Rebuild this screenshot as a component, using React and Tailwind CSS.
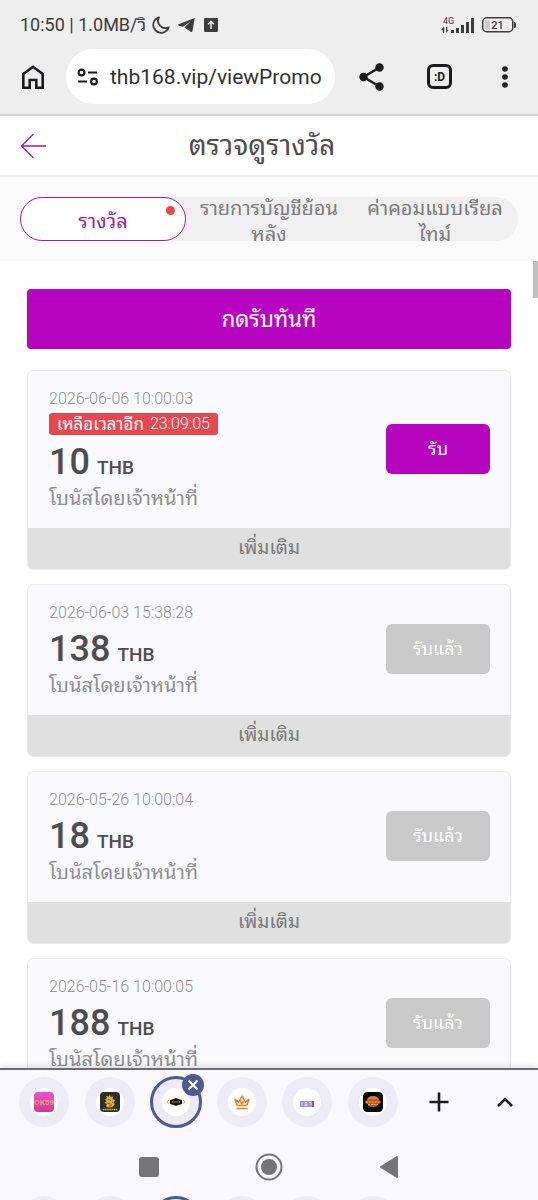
import { useState } from "react";

const REWARDS = [
  { date: "2026-06-06 10:00:03", amount: 10, timeLeft: "23:09:05", claimed: false },
  { date: "2026-06-03 15:38:28", amount: 138, claimed: true },
  { date: "2026-05-26 10:00:04", amount: 18, claimed: true },
  { date: "2026-05-16 10:00:05", amount: 188, claimed: true },
];

const TABS = ["รางวัล", "รายการบัญชีย้อนหลัง", "ค่าคอมแบบเรียลไทม์"];

function StatusBar() {
  return (
    <div className="flex h-[49px] items-center justify-between pl-5 pr-[22px] text-[#3c3c3c]">
      <div className="flex items-center text-lg leading-6">
        <span>10:50 | 1.0MB/วิ</span>
        <svg className="ml-[6px] h-[18px] w-[18px]" viewBox="0 0 18 18" fill="none" stroke="currentColor" strokeWidth="1.8" strokeLinejoin="round">
          <path d="M7 1.3A7.9 7.9 0 1 0 16.7 11.3A7.3 7.3 0 0 1 7 1.3Z" />
        </svg>
        <svg className="ml-2 h-4 w-[17px]" viewBox="0 0 17 16" fill="currentColor">
          <path d="M16.7 1L0 7.6Q0 8.4 1 8.7L4.8 9.8L12.5 4.6L6.5 10.4L13 15Q14.2 15.4 14.5 14Z" />
        </svg>
        <svg className="ml-[9px] h-[14px] w-[14px]" viewBox="0 0 14 14">
          <rect width="14" height="14" rx="1" fill="currentColor" />
          <path d="M7 11V3.5M4 6.3L7 3.3L10 6.3" fill="none" stroke="#eee" strokeWidth="1.5" />
        </svg>
      </div>
      <div className="flex items-center gap-[7px]">
        <svg className="h-[18px] w-[34px]" viewBox="0 0 34 18" fill="currentColor">
          <text x="2" y="8" fontSize="9" fontFamily="Roboto">4G</text>
          <path d="M2.5 11L0 14h1.800v3h1.400v-6zM5 11v6l2.500-3H6.300v-3z" />
          <rect x="10" y="14" width="3" height="3" />
          <rect x="15" y="12" width="3" height="5" />
          <rect x="20" y="9" width="3" height="8" />
          <rect x="25" y="6" width="3" height="11" />
          <rect x="30" y="2" width="3" height="15" />
        </svg>
        <svg className="h-4 w-[34px]" viewBox="0 0 34 16">
          <rect x="0.75" y="0.75" width="30" height="14" rx="4" fill="none" stroke="currentColor" strokeWidth="1.5" />
          <rect x="3" y="3" width="5" height="9.5" rx="1.5" fill="#ccc" />
          <path d="M32 5v6q2 0 2-1.500v-3Q34 5 32 5z" fill="currentColor" />
          <text x="15.5" y="12" fontSize="11" fontFamily="Roboto" fontWeight="500" textAnchor="middle" fill="currentColor">21</text>
        </svg>
      </div>
    </div>
  );
}

function BrowserBar() {
  return (
    <div className="flex items-center border-b-2 border-[#d4d4d4] pb-[10px] pl-5 pr-[23px] text-[#1b1b1f]">
      <button type="button" aria-label="Home">
        <svg className="h-[26px] w-[26px]" viewBox="0 0 26 26" fill="none" stroke="currentColor" strokeWidth="2.6">
          <path d="M3.3 10L13 2.8L22.7 10V23.7H16.3V16H9.7V23.7H3.3Z" />
        </svg>
      </button>
      <label className="ml-5 flex h-[55px] min-w-0 flex-1 items-center gap-3 rounded-full bg-white pl-[11px] pr-2">
        <svg className="h-5 w-[21px] shrink-0" viewBox="0 0 21 20" fill="none" stroke="currentColor" strokeWidth="2.2">
          <circle cx="4.5" cy="5.5" r="2.9" />
          <path d="M11 5.5H20M1 14.5H10" />
          <circle cx="17" cy="14.5" r="2.9" />
        </svg>
        <input
          type="text"
          aria-label="Address"
          defaultValue="thb168.vip/viewPromo"
          className="w-full min-w-0 bg-transparent text-[21px] leading-8 text-[#303034] outline-none"
        />
      </label>
      <button type="button" aria-label="Share" className="ml-6">
        <svg className="h-7 w-[26px]" viewBox="0 0 26 28" fill="currentColor">
          <path d="M20.5 4.5L4.5 14L20.5 23.5" fill="none" stroke="currentColor" strokeWidth="2.4" />
          <circle cx="20.5" cy="4.5" r="4.2" />
          <circle cx="4.5" cy="14" r="4.2" />
          <circle cx="20.5" cy="23.5" r="4.2" />
        </svg>
      </button>
      <button type="button" aria-label="Tabs" className="ml-[42px] flex h-[25px] w-[25px] items-center justify-center rounded-md border-[3px] border-current text-xs font-bold">
        :D
      </button>
      <button type="button" aria-label="Menu" className="ml-[43px]">
        <svg className="h-6 w-5" viewBox="0 0 20 24" fill="currentColor">
          <circle cx="10" cy="4" r="2.8" />
          <circle cx="10" cy="12" r="2.8" />
          <circle cx="10" cy="20" r="2.8" />
        </svg>
      </button>
    </div>
  );
}

function RewardCard({ reward }) {
  return (
    <article className="overflow-hidden rounded-md border border-[#ececf0] bg-[#fafafd]">
      <div className="flex items-center justify-between pb-[18px] pl-[21px] pr-5 pt-4">
        <div>
          <p className="text-base font-light leading-6 text-[#8f8f92]">{reward.date}</p>
          {reward.timeLeft && (
            <p className="mb-[3px] mt-[2px] flex h-[22px] w-fit items-center gap-[6px] rounded-[3px] bg-[#e9474f] px-2 leading-5 text-white">
              <span className="text-[17px]">เหลือเวลาอีก</span>
              <span className="text-base font-light">{reward.timeLeft}</span>
            </p>
          )}
          <p className="flex h-12 items-baseline gap-[7px] font-medium text-[#4d4d50]">
            <span className="text-4xl leading-[48px]">{reward.amount}</span>
            <span className="text-[19px] leading-6">THB</span>
          </p>
          <p className="text-xl leading-6 text-[#8f8f92]">โบนัสโดยเจ้าหน้าที่</p>
        </div>
        {reward.claimed ? (
          <button type="button" disabled className="h-[50px] w-[104px] rounded-md bg-[#c9c9c9] text-lg text-white">
            รับแล้ว
          </button>
        ) : (
          <button type="button" className="h-[50px] w-[104px] rounded-md bg-[#b704bf] text-lg text-white">
            รับ
          </button>
        )}
      </div>
      <button type="button" className="block h-[41px] w-full bg-[#e0e0e0] text-[19px] text-[#7c7c7c]">
        เพิ่มเติม
      </button>
    </article>
  );
}

/* Favicons of the open tab group */
function PinkIcon() {
  return (
    <svg className="h-5 w-5" viewBox="0 0 20 20">
      <defs>
        <linearGradient id="pink" x1="0" y1="0" x2="0" y2="1">
          <stop offset="0" stopColor="#f24fd0" />
          <stop offset="1" stopColor="#c93b9b" />
        </linearGradient>
      </defs>
      <rect width="20" height="20" rx="4" fill="url(#pink)" />
      <text x="10" y="13" fontSize="8" fontWeight="700" textAnchor="middle" fontFamily="Roboto" fill="#f9a25c">OK59</text>
    </svg>
  );
}

function LionIcon() {
  return (
    <svg className="h-5 w-5" viewBox="0 0 20 20">
      <rect width="20" height="20" rx="4" fill="#302d2c" />
      <path d="M10 2L9 4.5L6 4L7 6L5 7.5L6.5 9L4.5 11L7 12L6 14.5Q9 16.5 13 14.5L15 12L13.5 11L15 8L12.5 7L13 4.5L10.5 5Z" fill="#dcb52c" />
      <path d="M8 7.5l3 1M7.5 11l3 1M12 10l1 .5M9 14l3-1" stroke="#665016" strokeWidth="0.9" fill="none" />
      <path d="M3 17.5h14" stroke="#e4bc24" strokeWidth="1.3" strokeDasharray="1.5 0.6" />
    </svg>
  );
}

function BadgeIcon() {
  return (
    <svg className="h-5 w-5" viewBox="0 0 20 20">
      <path d="M2.8 8L0.8 10L2.8 12M17.2 8L19.2 10L17.2 12" fill="none" stroke="#d99c37" strokeWidth="1" />
      <path d="M4 8l3.5-1L10 6l2.5 1L16 8v4l-3.5 1L10 14l-2.5-1L4 12z" fill="#171411" />
      <path d="M6 10h8" stroke="#aa7438" strokeWidth="1.7" strokeDasharray="1.2 0.5" />
    </svg>
  );
}

function CrownIcon() {
  return (
    <svg className="h-5 w-5" viewBox="0 0 20 20" fill="none" stroke="#ed8125" strokeWidth="1.6" strokeLinejoin="round">
      <path d="M5.3 13.5L3 7.5L7.5 10.5M14.7 13.5L17 7.500L12.5 10.5M5.3 13.5H14.7" />
      <path d="M10 4L7.8 8.5L10 12L12.2 8.5Z" />
      <path d="M4.500 16.5H15.500" />
    </svg>
  );
}

function VioletIcon() {
  return (
    <svg className="h-5 w-5" viewBox="0 0 20 20">
      <rect x="3" y="9" width="14" height="6" fill="#a58bea" />
      <path d="M5 10.5v3M7.5 10.5h2.5M7.5 12h2.5v1.5h-2.5M12 10.5h2v3" fill="none" stroke="#f2edff" strokeWidth="0.8" />
      <path d="M15 9h2v6h-2z" fill="#7858d8" />
    </svg>
  );
}

function BurgerIcon() {
  return (
    <svg className="h-5 w-5" viewBox="0 0 20 20">
      <rect width="20" height="20" rx="4.5" fill="#080706" />
      <path d="M4 8q1-4 6-4t6 4z" fill="#cd873d" />
      <ellipse cx="10" cy="10" rx="8" ry="3" fill="#cf4d1d" />
      <path d="M3 10h14M5 12.5h10" stroke="#eab46a" strokeWidth="1" strokeDasharray="2 0.8" />
      <path d="M5 13h10q-1 2-5 2t-5-2" fill="#b45b22" />
    </svg>
  );
}

const GROUP = [PinkIcon, LionIcon, BadgeIcon, CrownIcon, VioletIcon, BurgerIcon];

function TabStrip() {
  return (
    <div className="grid h-16 grid-cols-8 items-center justify-items-center pl-[11px]">
      {GROUP.map((Icon, i) => (
        <div key={i} className="relative">
          <button
            type="button"
            aria-label={`Tab ${i + 1}`}
            className={`flex items-center justify-center rounded-full bg-[#ecebf6] ${
              i === 2 ? "h-[52px] w-[52px] border-[3px] border-[#4c5b94]" : "h-[50px] w-[50px]"
            }`}
          >
            <span className="flex h-7 w-7 items-center justify-center rounded-full bg-white">
              <Icon />
            </span>
          </button>
          {i === 2 && (
            <button
              type="button"
              aria-label="Close tab"
              className="absolute -right-[2px] -top-[2px] flex h-[22px] w-[22px] items-center justify-center rounded-full bg-[#4c5b94]"
            >
              <svg className="h-3 w-3" viewBox="0 0 12 12" stroke="#fff" strokeWidth="2">
                <path d="M1.5 1.5L10.5 10.5M10.5 1.5L1.5 10.5" />
              </svg>
            </button>
          )}
        </div>
      ))}
      <button type="button" aria-label="New tab">
        <svg className="h-5 w-5" viewBox="0 0 20 20" stroke="#1b1b1f" strokeWidth="2.6">
          <path d="M10 0.5V19.5M0.5 10H19.5" />
        </svg>
      </button>
      <button type="button" aria-label="Expand">
        <svg className="h-3 w-4" viewBox="0 0 16 12" fill="none" stroke="#1b1b1f" strokeWidth="2.6">
          <path d="M1 10L8 3L15 10" />
        </svg>
      </button>
    </div>
  );
}

function SystemNav() {
  return (
    <nav className="flex h-[66px] items-center justify-center gap-[92px] text-[#757577]">
      <button type="button" aria-label="Recent apps">
        <svg className="h-7 w-7" viewBox="0 0 28 28" fill="currentColor">
          <rect x="4" y="4" width="20" height="20" rx="3" />
        </svg>
      </button>
      <button type="button" aria-label="Home screen">
        <svg className="h-7 w-7" viewBox="0 0 28 28" fill="currentColor">
          <circle cx="14" cy="14" r="12.5" fill="none" stroke="currentColor" strokeWidth="2" />
          <circle cx="14" cy="14" r="8" />
        </svg>
      </button>
      <button type="button" aria-label="Back">
        <svg className="h-7 w-7" viewBox="0 0 28 28" fill="currentColor" stroke="currentColor" strokeWidth="2" strokeLinejoin="round">
          <path d="M22 4V24L6 14Z" />
        </svg>
      </button>
    </nav>
  );
}

export default function App() {
  const [active, setActive] = useState(0);

  return (
    <div className="flex h-screen flex-col overflow-hidden bg-white font-[Roboto,'Noto_Sans_Thai_Looped',Loma,Waree,Garuda,'Droid_Sans_Thai','Noto_Sans_Thai',sans-serif]">
      <div className="shrink-0 bg-[#eeeeee]">
        <StatusBar />
        <BrowserBar />
      </div>

      <header className="flex h-[61px] shrink-0 items-center border-b-2 border-[#ededed] pl-5 pr-[60px]">
        <button type="button" aria-label="Back to previous page">
          <svg className="h-[26px] w-[26px]" viewBox="0 0 26 26" fill="none" stroke="#a01aa8" strokeWidth="1.3">
            <path d="M26 13H1.5M13.5 1L1.5 13L13.5 25" />
          </svg>
        </button>
        <h1 className="flex-1 text-center text-[28px] leading-9 text-[#4d4d50]">ตรวจดูรางวัล</h1>
      </header>

      <div className="shrink-0 bg-[#fbfbfb] px-5 py-5">
        <div role="tablist" className="grid h-11 grid-cols-3 grid-rows-1 rounded-full bg-[#f0f0f0]">
          {TABS.map((tab, i) => (
            <button
              key={tab}
              type="button"
              role="tab"
              aria-selected={active === i}
              onClick={() => setActive(i)}
              className={`relative flex items-center justify-center rounded-full px-3 pt-[3px] text-xl leading-[26px] ${
                active === i ? "border border-[#a01aa8] bg-white text-[#a01aa8]" : "text-[#7c7c7c]"
              }`}
            >
              <span>{tab}</span>
              {i === 0 && <span className="absolute right-[10px] top-2 h-[9px] w-[9px] rounded-full bg-[#e9474f]" />}
            </button>
          ))}
        </div>
      </div>

      <main className="relative min-h-0 flex-1 overflow-hidden px-[27px] pt-7">
        <div className="absolute right-0 top-0 h-[37px] w-[5px] bg-[#c1c1c1]" />
        <button type="button" className="mb-[21px] block h-[60px] w-full rounded-[4px] bg-[#b704bf] text-[22px] text-white">
          กดรับทันที
        </button>
        <div className="flex flex-col gap-[14px]">
          {REWARDS.map((reward) => (
            <RewardCard key={reward.date} reward={reward} />
          ))}
        </div>
      </main>

      <footer className="relative shrink-0 border-t-2 border-[#6c6b74] bg-[#f9f8ff] shadow-[0_-2px_6px_rgba(0,0,0,0.12)]">
        <TabStrip />
        <SystemNav />
        <div aria-hidden="true" className="absolute inset-x-0 bottom-0 grid h-1 grid-cols-8 justify-items-center overflow-hidden pl-[11px]">
          {GROUP.map((_, i) => (
            <span
              key={i}
              className={`h-[50px] w-[50px] rounded-full bg-[#ecebf6] ${i === 2 ? "border-[3px] border-[#4c5b94]" : ""}`}
            />
          ))}
        </div>
      </footer>
    </div>
  );
}
